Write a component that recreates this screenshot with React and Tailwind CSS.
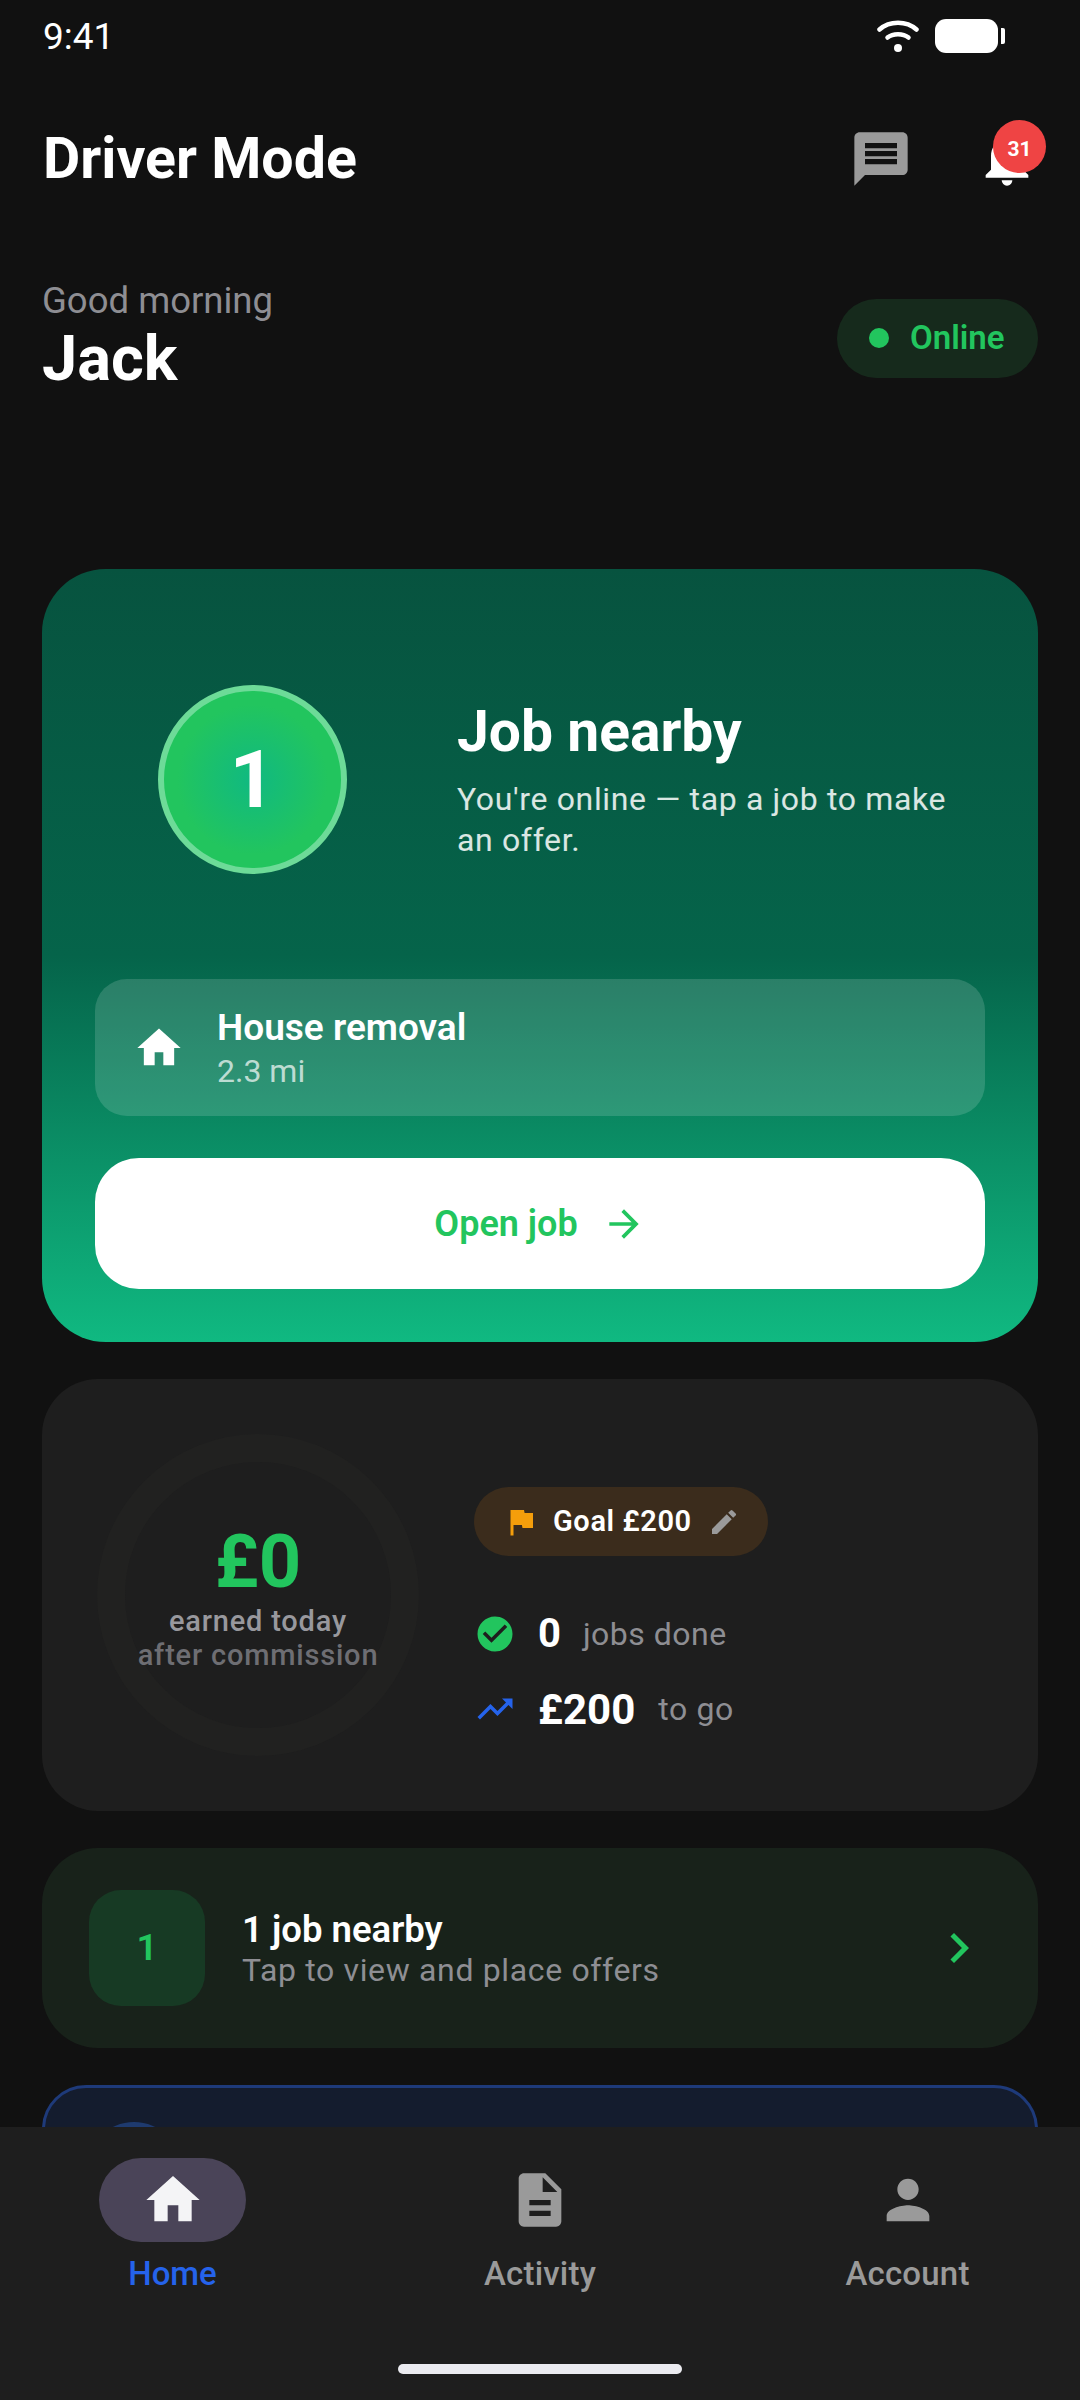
import React from "react";
import {
  MdArrowForward,
  MdCheckCircle,
  MdChevronRight,
  MdDescription,
  MdEdit,
  MdFlag,
  MdHome,
  MdMessage,
  MdNotifications,
  MdPerson,
  MdTrendingUp,
} from "react-icons/md";

const StatusBar = () => (
  <div className="flex h-[72px] items-center justify-between pl-[43px] pr-[75px] text-white">
    <span className="pt-[2px] text-[37px] leading-[44px]">9:41</span>
    <div className="flex items-center gap-[16px]">
      <svg width="42" height="34" viewBox="0 0 42 34" fill="none" stroke="white" strokeLinecap="round">
        <path d="M2.5 10.5C12.5 1.5 29.5 1.5 39.5 10.5" strokeWidth="4.5" />
        <path d="M10.5 18.5C16 14 26 14 31.5 18.5" strokeWidth="4.5" />
        <circle cx="21" cy="29" r="4" fill="white" stroke="none" />
      </svg>
      <div className="flex items-center gap-[3px]">
        <div className="h-[34px] w-[63px] rounded-[11px] bg-white" />
        <div className="h-[16px] w-[4px] rounded-r-[2px] bg-white" />
      </div>
    </div>
  </div>
);

const Header = () => (
  <div className="mt-[55px] flex h-[64px] items-center justify-between pl-[43px] pr-[41px]">
    <h1 className="text-[57.3px] font-bold leading-[64px] text-white">Driver Mode</h1>
    <div className="flex items-center gap-[62px]">
      <MdMessage size={64} color="#9a9a9a" />
      <div className="relative h-[64px] w-[64px]">
        <MdNotifications size={64} color="white" />
        <span className="absolute left-[18px] top-[-7px] flex h-[53px] w-[53px] items-center justify-center rounded-full bg-[#ef4444] pt-[6px] text-[21px] font-bold text-white">
          31
        </span>
      </div>
    </div>
  </div>
);

const Greeting = () => (
  <div className="mt-[89px] flex items-center justify-between px-[42px]">
    <div>
      <p className="text-[36.5px] leading-[42px] text-[#8e8e93]">Good morning</p>
      <p className="text-[63px] font-bold leading-[74px] text-white">Jack</p>
    </div>
    <div className="flex h-[79px] w-[201px] items-center gap-[21px] rounded-full bg-[#162a1c] pl-[32px]">
      <span className="h-[20px] w-[20px] rounded-full bg-[#22c55e]" />
      <span className="text-[33px] font-semibold leading-[40px] text-[#22c55e]">Online</span>
    </div>
  </div>
);

const HeroCard = () => (
  <section className="h-[773px] rounded-[64px] bg-[linear-gradient(180deg,#07533f_0%,#05644a_50%,#10b981_100%)] px-[53px] pt-[116px]">
    <div className="flex items-center pl-[63px]">
      <div className="flex h-[189px] w-[189px] shrink-0 items-center justify-center rounded-full border-[6px] border-[#6ddb98] bg-[radial-gradient(circle,#10b981_0%,#22c55e_60%)] text-[80px] font-bold leading-none text-white">
        1
      </div>
      <div className="ml-[110px]">
        <h2 className="text-[57px] font-bold leading-[66px] text-white">Job nearby</h2>
        <p className="mt-[14px] text-[32px] leading-[41px] tracking-[0.65px] text-white/85">
          You're online — tap a job to make an offer.
        </p>
      </div>
    </div>
    <div className="mt-[105px] flex h-[137px] items-center rounded-[32px] bg-white/15 pl-[38px]">
      <MdHome size={52} color="white" />
      <div className="ml-[32px]">
        <p className="text-[37px] font-semibold leading-[46px] text-white">House removal</p>
        <p className="text-[32px] leading-[40px] text-white/70">2.3 mi</p>
      </div>
    </div>
    <button className="mt-[42px] flex h-[131px] w-full items-center justify-center gap-[24px] rounded-[44px] bg-white text-[36px] font-semibold text-[#22c55e]">
      Open job
      <MdArrowForward size={44} />
    </button>
  </section>
);

const StatsCard = () => (
  <section className="mt-[37px] flex h-[432px] items-center rounded-[56px] bg-[#1e1e1e] pl-[55px]">
    <div className="flex h-[322px] w-[322px] shrink-0 flex-col items-center justify-center rounded-full border-[28px] border-[#212120] pt-[2px]">
      <span className="text-[74px] font-bold leading-[84px] text-[#22c55e]">£0</span>
      <span className="text-[29px] font-medium leading-[34px] tracking-[0.8px] text-[#98989d]">earned today</span>
      <span className="whitespace-nowrap text-[29px] font-medium leading-[34px] tracking-[0.8px] text-[#6e6e73]">after commission</span>
    </div>
    <div className="ml-[55px] pt-[31px]">
      <div className="flex h-[69px] w-[294px] items-center rounded-full bg-[#3b2c1c] pl-[29px]">
        <MdFlag size={36} color="#f59e0b" />
        <span className="ml-[14px] text-[29px] font-semibold tracking-[0.6px] text-white">Goal £200</span>
        <MdEdit size={32} color="#9a9a9a" className="ml-[16px]" />
      </div>
      <div className="mt-[53px] flex h-[50px] items-center">
        <MdCheckCircle size={42} color="#22c55e" />
        <span className="ml-[22px] text-[40px] font-bold text-white">0</span>
        <span className="ml-[22px] text-[32px] tracking-[0.5px] text-[#8e8e93]">jobs done</span>
      </div>
      <div className="mt-[25px] flex h-[50px] items-center">
        <MdTrendingUp size={42} color="#2563eb" />
        <span className="ml-[22px] text-[42px] font-bold text-white">£200</span>
        <span className="ml-[23px] text-[32px] tracking-[0.6px] text-[#8e8e93]">to go</span>
      </div>
    </div>
  </section>
);

const NearbyRow = () => (
  <section className="mt-[37px] flex h-[200px] items-center rounded-[56px] bg-[#18221a] pl-[47px] pr-[49px]">
    <div className="flex h-[116px] w-[116px] items-center justify-center rounded-[32px] bg-[#173a24] text-[37px] font-semibold text-[#22c55e]">
      1
    </div>
    <div className="ml-[37px] flex-1">
      <p className="text-[36.5px] font-semibold leading-[44px] text-white">1 job nearby</p>
      <p className="text-[32px] leading-[36px] tracking-[0.65px] text-[#8e8e93]">Tap to view and place offers</p>
    </div>
    <MdChevronRight size={60} color="#22c55e" />
  </section>
);

const NavItem = ({ icon: Icon, label, active }) => (
  <div className="flex w-[147px] flex-col items-center">
    <div className={`flex h-[84px] w-[147px] items-center justify-center rounded-[42px] ${active ? "bg-[#4a4458]" : ""}`}>
      <Icon size={64} color={active ? "#f4f4f6" : "#9a9a9a"} />
    </div>
    <span className={`mt-[12px] whitespace-nowrap text-[33px] font-medium leading-[40px] ${active ? "text-[#2563eb]" : "tracking-[0.2px] text-[#9a9a9a]"}`}>
      {label}
    </span>
  </div>
);

export default function App() {
  return (
    <div className="flex h-[2400px] w-[1080px] flex-col overflow-hidden bg-[#111111] font-['Roboto',sans-serif]">
      <StatusBar />
      <Header />
      <Greeting />
      <main className="mt-[97px] min-h-0 flex-1 overflow-hidden px-[42px] pt-[76px]">
        <HeroCard />
        <StatsCard />
        <NearbyRow />
        <section className="mt-[37px] h-[200px] rounded-[44px] border-[3px] border-[#1e3a7a] bg-[#141c2e] pl-[38px] pt-[34px]">
          <div className="ml-[3px] h-[96px] w-[96px] rounded-full bg-[#1e3a6e]" />
        </section>
      </main>
      <nav className="h-[273px] shrink-0 bg-[#1e1e1e] pt-[31px]">
        <div className="flex justify-between px-[99px]">
          <NavItem icon={MdHome} label="Home" active />
          <NavItem icon={MdDescription} label="Activity" />
          <NavItem icon={MdPerson} label="Account" />
        </div>
        <div className="mx-auto mt-[70px] h-[10px] w-[284px] rounded-full bg-[#ebebf0]" />
      </nav>
    </div>
  );
}
